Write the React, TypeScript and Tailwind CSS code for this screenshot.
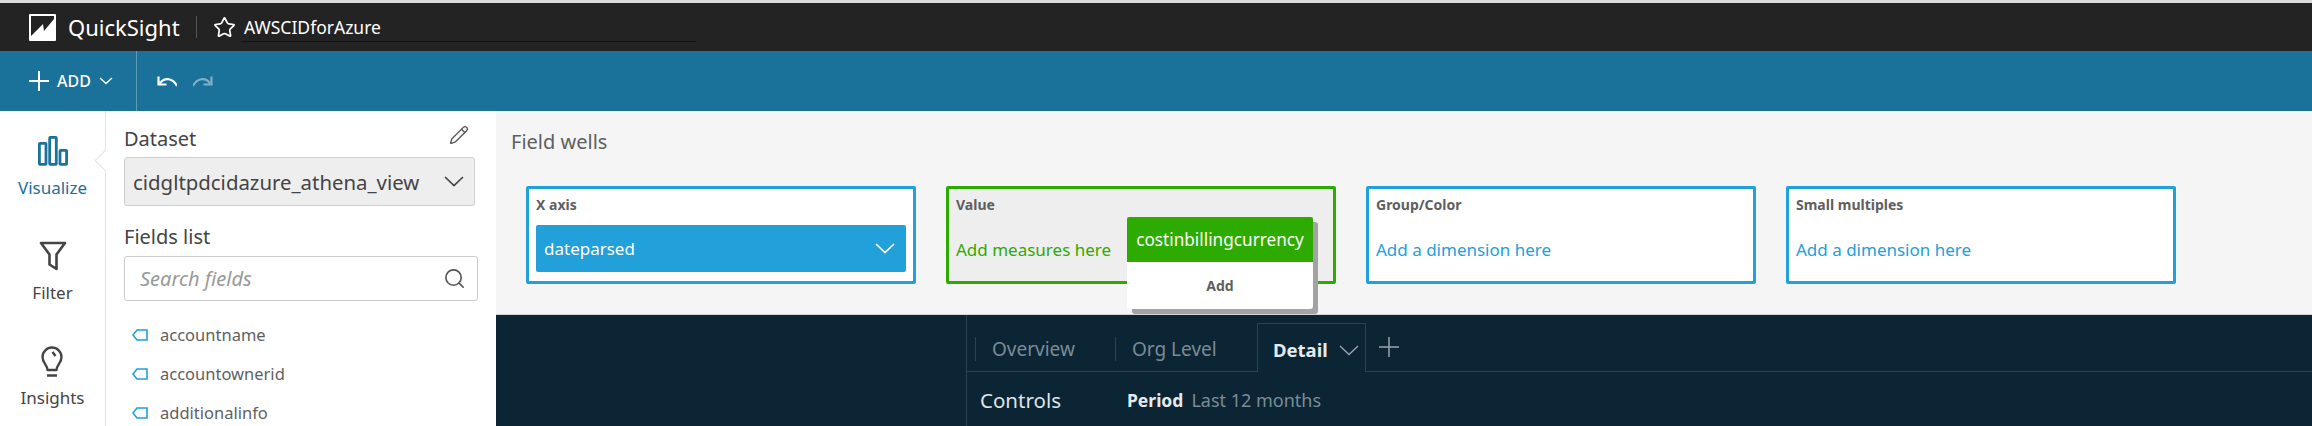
import React from 'react';
import { Star, Pencil, Search } from 'lucide-react';

const font = { fontFamily: '"Noto Sans", "Open Sans", sans-serif' };

const Chevron = ({ w = 20, h = 11, color = 'currentColor', stroke = 1.6, className = '' }: any) => (
  <svg width={w} height={h} viewBox={`0 0 ${w} ${h}`} fill="none" stroke={color} strokeWidth={stroke} className={`shrink-0 ${className}`}>
    <path d={`M1 1L${w / 2} ${h - 1.5}L${w - 1} 1`} />
  </svg>
);

const PlusMark = ({ size = 20, color = 'currentColor', stroke = 2, className = '' }: any) => (
  <svg width={size} height={size} viewBox={`0 0 ${size} ${size}`} stroke={color} strokeWidth={stroke} className={`shrink-0 ${className}`}>
    <path d={`M${size / 2} 0V${size}M0 ${size / 2}H${size}`} />
  </svg>
);

const FieldIcon = () => (
  <svg width="16" height="12" viewBox="0 0 16 12" fill="none" stroke="#22a0d9" strokeWidth="1.6" className="shrink-0">
    <path d="M15 1H5L1 6l4 5h10z" />
  </svg>
);

const Logo = () => (
  <svg width="27" height="27" viewBox="0 0 27 27" className="shrink-0">
    <rect width="27" height="27" rx="1" fill="#fff" />
    <path d="M2 2h23v3L15 17l-1-7L2 22z" fill="#232323" />
  </svg>
);

const RailItem = ({ icon, label, active = false }: any) => (
  <div className={`flex flex-col items-center gap-[10px] ${active ? 'text-[#1a7199]' : 'text-[#444]'}`}>
    <div className="h-[30px] flex items-center">{icon}</div>
    <span className="text-[17px] leading-[24px]">{label}</span>
  </div>
);

const Well = ({ label, hint, active = false, children }: any) => (
  <div className={`relative w-[390px] h-[98px] rounded-[2px] border-[3px] px-[7px] ${active ? 'border-[#2eab00] bg-[#eeeeee]' : 'border-[#22a0d9] bg-white'}`}>
    <div className="pt-[6px] text-[14px] leading-[20px] font-bold text-[#5f5f5f]">{label}</div>
    {hint && <div className={`mt-[23px] text-[17px] leading-[24px] ${active ? 'text-[#2eab00]' : 'text-[#22a0d9]'}`}>{hint}</div>}
    {children}
  </div>
);

const App: React.FC = () => {
  return (
    <div className="w-[2312px] h-[426px] overflow-hidden flex flex-col bg-white" style={font}>
      {/* Top bar */}
      <header className="h-[51px] shrink-0 border-t-[3px] border-[#dcdcdc] bg-[#232323] flex items-center pl-[29px] text-white">
        <Logo />
        <span className="ml-[12px] w-[111px] text-[22px] leading-[28px]">QuickSight</span>
        <div className="ml-[17px] w-px h-[22px] bg-[#555]" />
        <Star size={23} className="ml-[16px]" strokeWidth={1.8} />
        <div className="ml-[8px] relative">
          <span className="text-[17.5px] leading-[24px]">AWSCIDforAzure</span>
          <div className="absolute left-[-3px] top-[26px] w-[455px] h-px bg-[#111]" />
        </div>
      </header>

      {/* Toolbar */}
      <div className="h-[60px] shrink-0 bg-[#1a7199] flex items-center text-white">
        <div className="w-[137px] h-full border-r border-[#5f9cb8] flex items-center pl-[29px]">
          <PlusMark size={20} />
          <span className="ml-[8px] text-[16px] font-medium">ADD</span>
          <Chevron w={14} h={8} stroke={1.4} className="ml-[8px]" />
        </div>
        <svg width="20" height="14" viewBox="0 0 20 14" fill="none" stroke="#fff" strokeWidth="2.2" className="ml-[20px]">
          <path d="M20 12C16 4 8 3 3 9M1.5 2.5V10.5H9.5" />
        </svg>
        <svg width="20" height="14" viewBox="0 0 20 14" fill="none" stroke="#7fb0c7" strokeWidth="2.2" className="ml-[16px]">
          <path d="M0 12C4 4 12 3 17 9M18.5 2.5V10.5H10.5" />
        </svg>
      </div>

      <div className="flex-1 flex min-h-0">
        {/* Left rail */}
        <nav className="relative w-[106px] shrink-0 border-r border-[#e4e4e4] flex flex-col items-center pt-[25px] gap-[41px]">
          <RailItem
            active
            label="Visualize"
            icon={
              <svg width="30" height="30" viewBox="0 0 30 30" fill="none" stroke="#1a7199" strokeWidth="2.8">
                <rect x="1.4" y="7.4" width="6.6" height="21" rx="0.6" />
                <rect x="11.7" y="1.4" width="6.6" height="27" rx="0.6" />
                <rect x="22" y="14.4" width="6.6" height="14" rx="0.6" />
              </svg>
            }
          />
          <RailItem
            label="Filter"
            icon={
              <svg width="28" height="30" viewBox="0 0 28 30" fill="none" stroke="#444" strokeWidth="2.6">
                <path d="M2 2h24L17.5 13.5V28l-7-4.5V13.5z" strokeLinejoin="round" />
              </svg>
            }
          />
          <RailItem
            label="Insights"
            icon={
              <svg width="22" height="31" viewBox="0 0 22 31" fill="none" stroke="#444" strokeWidth="2.4">
                <path d="M6.5 24c0-5-5-7-5-13a9.5 9.5 0 0 1 19 0c0 6-5 8-5 13z" strokeLinejoin="round" />
                <path d="M11.5 6l3 4M6 29.5h10" />
              </svg>
            }
          />
          <div className="absolute right-[-1px] top-[36px] w-[12px] h-[28px] overflow-hidden">
            <div className="absolute left-[4px] top-[5px] w-[17px] h-[17px] rotate-45 bg-white border border-[#e4e4e4]" />
          </div>
        </nav>

        {/* Fields panel */}
        <aside className="w-[390px] shrink-0 pl-[18px] pr-[18px] pt-[16px] text-[#444]">
          <div className="flex items-center justify-between pr-[9px]">
            <span className="text-[20px] leading-[24px]">Dataset</span>
            <Pencil size={20} strokeWidth={1.6} className="text-[#555] -mt-[8px]" />
          </div>
          <div className="mt-[6px] h-[49px] w-[351px] rounded-[3px] border border-[#cfcfcf] bg-[#eeeeee] flex items-center justify-between pl-[8px] pr-[10px]">
            <span className="text-[20.4px] leading-[24px]">cidgltpdcidazure_athena_view</span>
            <Chevron w={20} h={11} color="#444" stroke={1.7} />
          </div>
          <div className="mt-[19px] text-[20px] leading-[24px]">Fields list</div>
          <div className="mt-[7px] h-[45px] w-[354px] rounded-[3px] border border-[#cccccc] flex items-center justify-between pl-[15px] pr-[11px]">
            <span className="text-[20px] italic text-[#999]">Search fields</span>
            <Search size={23} strokeWidth={1.7} className="text-[#555]" />
          </div>
          <ul className="mt-[22px] flex flex-col gap-[15px] text-[#5f5f5f] pl-[8px]">
            {['accountname', 'accountownerid', 'additionalinfo'].map((name) => (
              <li key={name} className="flex items-center gap-[12px] text-[16.5px] leading-[24px]">
                <FieldIcon />
                {name}
              </li>
            ))}
          </ul>
        </aside>

        {/* Field wells and sheet */}
        <main className="flex-1 min-w-0 flex flex-col">
          <section className="h-[204px] shrink-0 bg-[#f5f5f5] border-b border-[#d5d5d5] pl-[15px]">
            <h2 className="pt-[19px] text-[20px] leading-[24px] text-[#5f5f5f]">Field wells</h2>
            <div className="mt-[32px] ml-[15px] flex gap-[30px]">
              <Well label="X axis">
                <div className="mt-[10px] h-[47px] rounded-[2px] bg-[#22a0d9] flex items-center justify-between pl-[8px] pr-[11px] text-white">
                  <span className="text-[17px]">dateparsed</span>
                  <Chevron w={20} h={11} stroke={1.7} />
                </div>
              </Well>
              <Well label="Value" hint="Add measures here" active>
                <div className="absolute left-[178px] top-[28px] w-[186px] rounded-[3px] bg-white shadow-[5px_5px_0_#a3a3a3] z-10">
                  <div className="h-[45px] rounded-t-[2px] bg-[#2eab00] flex items-center justify-center text-white text-[17.2px]">
                    costinbillingcurrency
                  </div>
                  <div className="h-[47px] flex items-center justify-center text-[14px] font-bold text-[#5f5f5f]">Add</div>
                </div>
              </Well>
              <Well label="Group/Color" hint="Add a dimension here" />
              <Well label="Small multiples" hint="Add a dimension here" />
            </div>
          </section>

          <section className="flex-1 bg-[#0b2535] pl-[470px]">
            <div className="h-full border-l border-[#2a4353]">
              <div className="h-[57px] pt-[8px] flex items-stretch border-b border-[#2a4353] relative">
                <div className="flex items-center w-[290px] h-[48px] pt-[4px] text-[#7b8b95] text-[19px]">
                  <div className="ml-[8px] w-px h-[24px] bg-[#2a4353]" />
                  <span className="ml-[16px] w-[83px]">Overview</span>
                  <div className="ml-[40px] w-px h-[24px] bg-[#2a4353]" />
                  <span className="ml-[16px]">Org Level</span>
                </div>
                <div className="w-[109px] h-[49px] border border-b-0 border-[#2a4353] bg-[#0b2535] flex items-center pt-[4px] pl-[15px] text-[#e6eaed] text-[18.5px] font-bold">
                  <span className="w-[53px]">Detail</span>
                  <Chevron w={20} h={11} color="#9aa7af" stroke={1.3} className="ml-[13px]" />
                </div>
                <div className="h-[48px] flex items-center ml-[13px]">
                  <PlusMark size={20} color="#9aa7af" stroke={1.5} />
                </div>
              </div>
              <div className="flex items-center h-[56px] pl-[13px]">
                <span className="w-[147px] text-[#dfe4e7] text-[20.5px]">Controls</span>
                <span className="text-[#e6eaed] text-[17.5px] font-bold">Period</span>
                <span className="ml-[8px] text-[#7b8b95] text-[18px]">Last 12 months</span>
              </div>
            </div>
          </section>
        </main>
      </div>
    </div>
  );
};

export default App;
